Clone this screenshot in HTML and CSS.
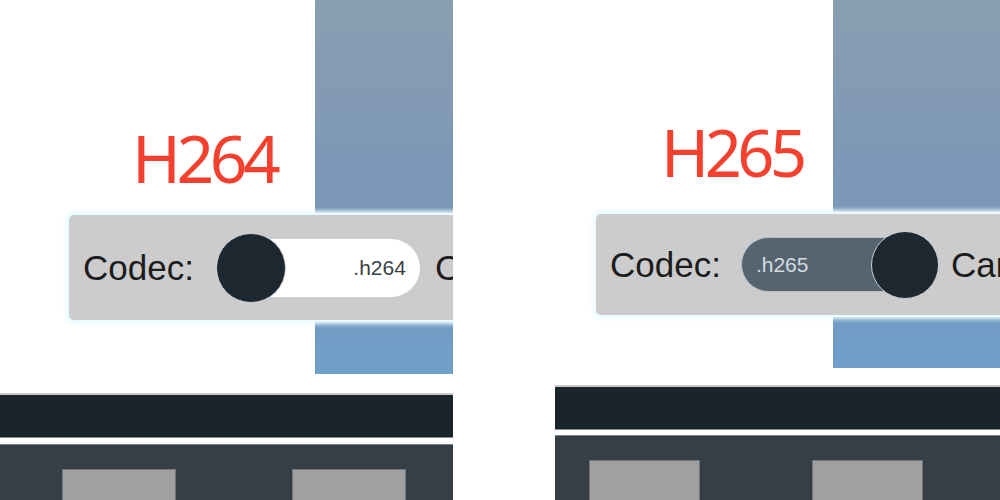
FILE: index.html
```html
<!DOCTYPE html>
<html lang="en">
<head>
<meta charset="utf-8">
<title>Codec comparison</title>
<link rel="stylesheet" href="styles.css">
</head>
<body>
<div class="canvas">
  <section class="phone p1">
    <div class="video"></div>
    <div class="stage">
      <h1 class="title">H264</h1>
      <div class="controls">
        <span class="label">Codec:</span>
        <div class="toggle off">
          <span class="track"><span class="val">.h264</span></span>
          <span class="knob"></span>
        </div>
        <span class="label">Camera:</span>
      </div>
    </div>
    <div class="bar"></div>
    <div class="sep"></div>
    <div class="dock">
      <div class="tile"></div>
      <div class="tile"></div>
    </div>
  </section>
  <section class="phone p2">
    <div class="video"></div>
    <div class="stage">
      <h1 class="title">H265</h1>
      <div class="controls">
        <span class="label">Codec:</span>
        <div class="toggle on">
          <span class="track"><span class="val">.h265</span></span>
          <span class="knob"></span>
        </div>
        <span class="label">Camera:</span>
      </div>
    </div>
    <div class="bar"></div>
    <div class="sep"></div>
    <div class="dock">
      <div class="tile"></div>
      <div class="tile"></div>
    </div>
  </section>
</div>
</body>
</html>
```

FILE: styles.css
```css
html, body {
  margin: 0;
  padding: 0;
  background: #ffffff;
}

.canvas {
  display: flex;
  gap: 102px;
  width: 1000px;
  height: 500px;
  overflow: hidden;
}

.phone {
  position: relative;
  overflow: hidden;
  height: 500px;
  background: #ffffff;
  display: flex;
  flex-direction: column;
}

.p1 { width: 453px; }
.p2 { width: 445px; }

.video {
  position: absolute;
  top: 0;
  right: 0;
  background: linear-gradient(180deg, #8a9eb1 0%, #7e98b6 40%, #7798bf 75%, #6f9fca 100%);
}
.p1 .video { left: 315px; height: 374px; }
.p2 .video { left: 278px; height: 368px; }

.stage {
  position: relative;
  flex: none;
  display: flex;
  flex-direction: column;
  align-items: flex-start;
}
.p1 .stage { height: 393px; }
.p2 .stage { height: 385px; }

.title {
  margin: 0;
  font-family: "Noto Sans", "Open Sans", sans-serif;
  font-weight: 400;
  color: #f4412f;
  line-height: 1;
}
.p1 .title {
  font-size: 66px;
  letter-spacing: -4.5px;
  margin-top: 124px;
  margin-left: 132px;
}
.p2 .title {
  font-size: 65px;
  letter-spacing: -4.5px;
  margin-top: 120px;
  margin-left: 106px;
}

.controls {
  display: flex;
  align-items: center;
  background: #cccccc;
  border-radius: 5px;
  box-shadow: 0 0 0 2px #eafcff, 0 0 4px 4px #eefcff;
  width: 600px;
  padding-left: 14px;
  box-sizing: border-box;
  flex: none;
}
.p1 .controls { margin-left: 69px; margin-top: 25px; height: 105px; }
.p2 .controls { margin-left: 41px; margin-top: 29px; height: 101px; }

.label {
  font-family: "Liberation Sans", Arial, sans-serif;
  font-size: 35px;
  color: #1c1c1c;
  white-space: nowrap;
}

.toggle {
  position: relative;
  flex: none;
  display: flex;
  align-items: center;
}
.p1 .toggle { width: 204px; height: 70px; margin: 0 15px 0 22px; }
.p2 .toggle { width: 198px; height: 68px; margin: 0 12px 0 20px; }

.track {
  display: flex;
  align-items: center;
  box-sizing: border-box;
  font-family: "Liberation Sans", Arial, sans-serif;
  font-size: 21px;
}
.off .track {
  width: 100%;
  height: 58px;
  border-radius: 29px;
  background: #ffffff;
  justify-content: flex-end;
  padding-right: 14px;
  color: #3a3f44;
}
.on .track {
  width: 185px;
  height: 55px;
  border-radius: 28px;
  background: #56646f;
  border: 1px solid #b9c0c5;
  padding-left: 14px;
  color: #d5dce1;
}

.knob {
  position: absolute;
  top: 0;
  border-radius: 50%;
  background: #1d2730;
  border: 1px solid #c9ced2;
  box-sizing: border-box;
}
.p1 .knob { left: 0; width: 70px; height: 70px; }
.p2 .knob { right: 0; width: 68px; height: 68px; }

.bar {
  flex: none;
  background: #1a252b;
  border-top: 2px solid #c9c9c9;
  border-bottom: 1px solid #8a9094;
}
.p1 .bar { height: 42px; }
.p2 .bar { height: 42px; }

.sep {
  flex: none;
  background: #ffffff;
}
.p1 .sep { height: 6px; }
.p2 .sep { height: 5px; }

.dock {
  flex: 1 1 auto;
  min-height: 0;
  overflow: hidden;
  display: flex;
  align-items: flex-start;
  background: #353f45;
  border-top: 1px solid #7b8287;
}
.p1 .dock { padding: 24px 0 0 62px; gap: 116px; }
.p2 .dock { padding: 24px 0 0 34px; gap: 112px; }

.tile {
  flex: none;
  height: 60px;
  background: #a0a0a0;
  border: 1px solid #6f777c;
  box-sizing: border-box;
}
.p1 .tile { width: 114px; }
.p2 .tile { width: 111px; }
```
